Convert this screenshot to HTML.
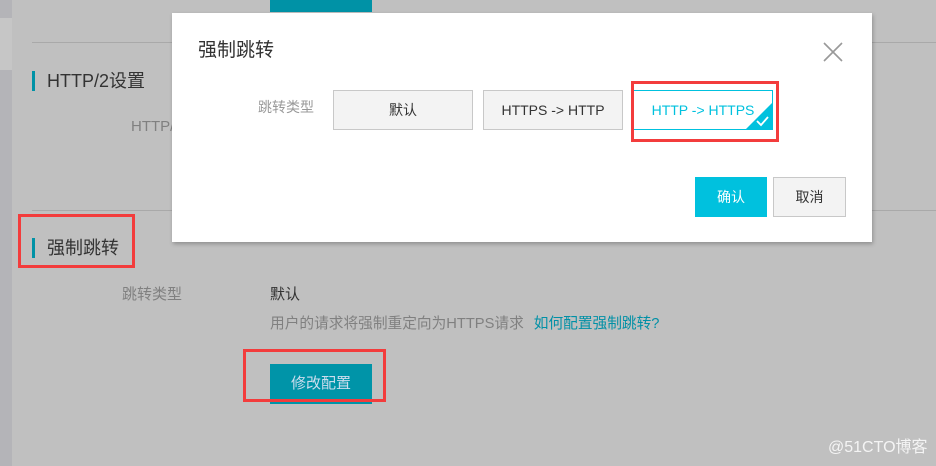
<!DOCTYPE html>
<html><head><meta charset="utf-8"><style>
*{margin:0;padding:0;box-sizing:border-box}
body{width:936px;height:466px;overflow:hidden;background:#c0c0c0;position:relative;font-family:"Liberation Sans","Noto Sans CJK SC",sans-serif;}
.a{position:absolute}
</style></head><body>
<div class="a" style="left:0;top:0;width:12px;height:466px;background:#b4b4b8"></div>
<div class="a" style="left:0;top:18px;width:12px;height:52px;background:#c6c6c6"></div>
<div class="a" style="left:270px;top:0;width:102px;height:12px;background:#0092a6"></div>
<div class="a" style="left:32px;top:42px;width:904px;height:1px;background:#a9a9a9"></div>
<div class="a" style="left:32px;top:210px;width:904px;height:1px;background:#a9a9a9"></div>
<div class="a" style="left:32px;top:71px;width:3px;height:20px;background:#0092a6"></div>
<div class="a" style="left:47px;top:69px;font-size:18px;color:#333;line-height:24px">HTTP/2设置</div>
<div class="a" style="left:131px;top:118px;font-size:15px;color:#808080;line-height:18px">HTTP/2</div>
<div class="a" style="left:32px;top:238px;width:3px;height:20px;background:#0092a6"></div>
<div class="a" style="left:47px;top:236px;font-size:18px;color:#333;line-height:24px">强制跳转</div>
<div class="a" style="left:18px;top:214px;width:117px;height:54px;border:3px solid #f33c3c"></div>
<div class="a" style="left:122px;top:286px;font-size:15px;color:#808080;line-height:18px">跳转类型</div>
<div class="a" style="left:270px;top:286px;font-size:15px;color:#333;line-height:18px">默认</div>
<div class="a" style="left:270px;top:315px;font-size:14.7px;color:#808080;line-height:18px">用户的请求将强制重定向为HTTPS请求<span style="color:#0090a6;margin-left:10px">如何配置强制跳转?</span></div>
<div class="a" style="left:270px;top:364px;width:102px;height:40px;background:#0094a8;color:#cde;font-size:15px;line-height:40px;text-align:center">修改配置</div>
<div class="a" style="left:243px;top:349px;width:143px;height:53px;border:3px solid #f33c3c"></div>
<div class="a" style="left:828px;top:438px;font-size:16px;color:#f4f4f4;line-height:20px">@51CTO博客</div>

<div class="a" style="left:172px;top:13px;width:700px;height:229px;background:#fff;box-shadow:1px 2px 4px rgba(0,0,0,.25)">
 <div class="a" style="left:26px;top:26px;font-size:19px;color:#333;line-height:24px">强制跳转</div>
 <svg class="a" style="left:651px;top:29px" width="20" height="20"><path d="M1 1L19 19M19 1L1 19" stroke="#999" stroke-width="1.6"/></svg>
 <div class="a" style="left:86px;top:85px;font-size:14px;color:#999;line-height:18px">跳转类型</div>
 <div class="a" style="left:161px;top:77px;width:140px;height:40px;background:#f3f3f3;border:1px solid #c8c8c8;font-size:14px;color:#333;line-height:38px;text-align:center">默认</div>
 <div class="a" style="left:311px;top:77px;width:140px;height:40px;background:#f3f3f3;border:1px solid #c8c8c8;font-size:14px;color:#333;line-height:38px;text-align:center">HTTPS -&gt; HTTP</div>
 <div class="a" style="left:461px;top:77px;width:140px;height:40px;background:#fff;border:1px solid #00c1de;font-size:14px;color:#00c1de;line-height:38px;text-align:center;overflow:hidden">HTTP -&gt; HTTPS
  <svg class="a" style="right:0;bottom:0" width="26" height="26"><path d="M26 0L26 26L0 26Z" fill="#00c1de"/><path d="M11 18L15 22L22 14" stroke="#fff" stroke-width="1.8" fill="none"/></svg>
 </div>
 <div class="a" style="left:459px;top:68px;width:148px;height:61px;border:3px solid #f33c3c"></div>
 <div class="a" style="left:523px;top:164px;width:72px;height:40px;background:#00c1de;color:#fff;font-size:14px;line-height:40px;text-align:center">确认</div>
 <div class="a" style="left:601px;top:164px;width:73px;height:40px;background:#f3f3f3;border:1px solid #c8c8c8;color:#333;font-size:14px;line-height:38px;text-align:center">取消</div>
</div>
</body></html>
